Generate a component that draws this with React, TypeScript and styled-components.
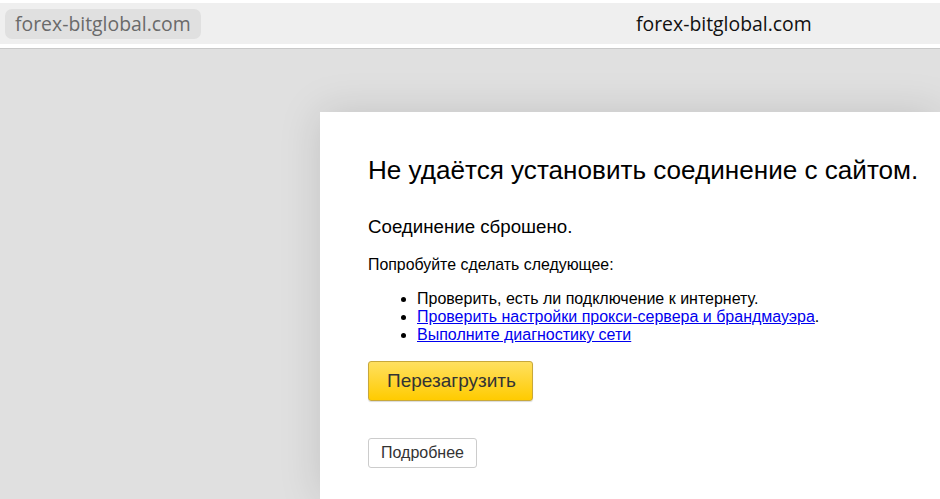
import * as React from 'react';
import styled, { createGlobalStyle } from 'styled-components';

const GlobalStyle = createGlobalStyle`
  html, body {
    margin: 0;
    padding: 0;
    background: #e0e0e0;
    overflow: hidden;
  }
`;

const Page = styled.div`
  display: flex;
  flex-direction: column;
  width: 940px;
  height: 499px;
  background: #fff;
  overflow: hidden;
`;

const TopBar = styled.header`
  display: flex;
  align-items: center;
  height: 41px;
  margin-top: 3px;
  padding: 0 5px;
  background: #efefef;
  font-family: "Open Sans", "Noto Sans", sans-serif;
  font-size: 19.4px;
`;

const AddressPill = styled.div`
  display: flex;
  align-items: center;
  height: 30px;
  padding: 0 10px;
  border-radius: 7px;
  background: #e0e0e0;
  color: #6a6a6a;
`;

const TabTitle = styled.div`
  flex: 1;
  text-align: center;
  padding-left: 312px;
  color: #111;
`;

const Divider = styled.div`
  height: 4px;
  background: #fff;
  border-bottom: 1px solid #c9c9c9;
`;

const Backdrop = styled.main`
  flex: 1;
  display: flex;
  padding: 63px 0 0 320px;
  background: #e0e0e0;
  overflow: hidden;
`;

const Card = styled.section`
  flex: 1;
  padding: 42px 0 0 48px;
  background: #fff;
  box-shadow: 0 0 40px rgba(0, 0, 0, 0.13);
  font-family: "Liberation Sans", Arial, sans-serif;
  color: #000;
`;

const Title = styled.h1`
  margin: 0;
  font-size: 26.1px;
  font-weight: normal;
  line-height: 32px;
  white-space: nowrap;
`;

const Subtitle = styled.p`
  margin: 30px 0 0;
  font-size: 18.7px;
  line-height: 22px;
`;

const Hint = styled.p`
  margin: 17px 0 0;
  font-size: 15.9px;
  line-height: 20px;
`;

const Steps = styled.ul`
  margin: 15px 0 0;
  padding-left: 49px;
  font-size: 16px;
  line-height: 18px;
`;

const StepLink = styled.a`
  color: #0000ee;
  text-decoration: underline;
`;

const Button = styled.button<{ $primary?: boolean }>`
  display: block;
  font-family: "Liberation Sans", Arial, sans-serif;
  color: #333;
  cursor: pointer;
  border-radius: 3px;
  ${p => p.$primary ? `
    margin-top: 17px;
    height: 40px;
    padding: 0 16px 0 18px;
    font-size: 19px;
    background: linear-gradient(#ffe060, #ffcb00);
    border: 1px solid #c8a83a;
    box-shadow: 0 1px 1px rgba(0, 0, 0, 0.15);
  ` : `
    margin-top: 37px;
    height: 30px;
    padding: 0 12px;
    font-size: 16px;
    background: #fff;
    border: 1px solid #cccccc;
  `}
`;

const App: React.FC = () => (
  <Page>
    <GlobalStyle />
    <TopBar>
      <AddressPill>forex-bitglobal.com</AddressPill>
      <TabTitle>forex-bitglobal.com</TabTitle>
    </TopBar>
    <Divider />
    <Backdrop>
      <Card>
        <Title>Не удаётся установить соединение с сайтом.</Title>
        <Subtitle>Соединение сброшено.</Subtitle>
        <Hint>Попробуйте сделать следующее:</Hint>
        <Steps>
          <li>Проверить, есть ли подключение к интернету.</li>
          <li><StepLink href="#">Проверить настройки прокси-сервера и брандмауэра</StepLink>.</li>
          <li><StepLink href="#">Выполните диагностику сети</StepLink></li>
        </Steps>
        <Button $primary>Перезагрузить</Button>
        <Button>Подробнее</Button>
      </Card>
    </Backdrop>
  </Page>
);

export default App;
